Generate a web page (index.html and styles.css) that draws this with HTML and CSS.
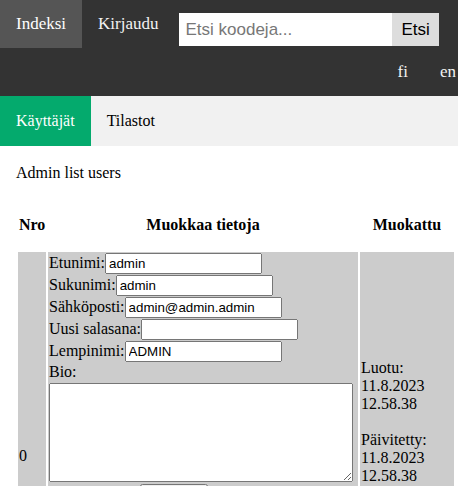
FILE: index.html
```html
<!DOCTYPE html>
<html lang="fi">
<head>
<meta charset="utf-8">
<title>Admin list users</title>
<link rel="stylesheet" href="styles.css">
</head>
<body>
<div class="page">
  <nav class="topnav">
    <a class="nav-link active" href="#">Indeksi</a>
    <a class="nav-link" href="#">Kirjaudu</a>
    <form class="search">
      <input class="search-input" type="text" placeholder="Etsi koodeja...">
      <button class="search-btn" type="button">Etsi</button>
    </form>
    <div class="lang">
      <a class="nav-link" href="#">fi</a>
      <a class="nav-link" href="#">en</a>
    </div>
  </nav>
  <nav class="subnav">
    <a class="sub-link active" href="#">Käyttäjät</a>
    <a class="sub-link" href="#">Tilastot</a>
  </nav>
  <main class="content">
    <p class="title">Admin list users</p>
    <table class="users">
      <thead>
        <tr>
          <th class="col-nro">Nro</th>
          <th class="col-edit">Muokkaa tietoja</th>
          <th class="col-date">Muokattu</th>
        </tr>
      </thead>
      <tbody>
        <tr class="user-row">
          <td>0</td>
          <td class="edit-cell">
            <form class="edit-form">
              <div class="field-row"><label>Etunimi:</label><input class="field" type="text" value="admin"></div>
              <div class="field-row"><label>Sukunimi:</label><input class="field" type="text" value="admin"></div>
              <div class="field-row"><label>Sähköposti:</label><input class="field" type="text" value="admin@admin.admin"></div>
              <div class="field-row"><label>Uusi salasana:</label><input class="field" type="password" value=""></div>
              <div class="field-row"><label>Lempinimi:</label><input class="field" type="text" value="ADMIN"></div>
              <label class="bio-label">Bio:</label>
              <textarea class="bio"></textarea>
              <div class="actions"><button class="small-btn" type="button" aria-label="Tallenna"></button></div>
            </form>
          </td>
          <td class="dates">Luotu:<br>11.8.2023<br>12.58.38<br><br>Päivitetty:<br>11.8.2023<br>12.58.38</td>
        </tr>
      </tbody>
    </table>
  </main>
</div>
</body>
</html>
```

FILE: styles.css
```css
html {
  overflow-x: hidden;
}

body {
  margin: 0;
  font-family: "Liberation Serif", "Times New Roman", serif;
  font-size: 16px;
  color: #000;
  background: #fff;
}

.page {
  width: 472px;
}

.topnav {
  display: flex;
  flex-wrap: wrap;
  align-items: flex-start;
  background: #333;
}

.nav-link {
  display: block;
  padding: 14px 16px;
  font-size: 17px;
  line-height: 20px;
  color: #f2f2f2;
  text-decoration: none;
}

.nav-link.active {
  background: #555;
  color: #fff;
}

.search {
  display: flex;
  margin: 13px 0 0 5px;
}

.search-input {
  box-sizing: border-box;
  width: 213px;
  height: 33px;
  padding: 6px;
  border: none;
  border-radius: 0;
  font-family: "Liberation Sans", Arial, sans-serif;
  font-size: 17px;
  outline: none;
}

.search-input::placeholder {
  color: #777;
}

.search-btn {
  box-sizing: border-box;
  height: 33px;
  padding: 0 9px;
  border: none;
  border-radius: 0;
  background: #ddd;
  color: #000;
  font-family: "Liberation Sans", Arial, sans-serif;
  font-size: 17px;
}

.lang {
  display: flex;
  justify-content: flex-end;
  width: 100%;
}

.subnav {
  display: flex;
  background: #f1f1f1;
}

.sub-link {
  display: block;
  padding: 16px;
  font-size: 16px;
  line-height: 18px;
  color: #000;
  text-decoration: none;
}

.sub-link.active {
  background: #04aa6d;
  color: #fff;
}

.content {
  padding: 0 16px;
}

.title {
  margin: 18px 0 16px;
}

.users {
  width: 100%;
  table-layout: fixed;
  border-spacing: 2px;
}

.users th {
  box-sizing: border-box;
  padding: 16px 1px;
  font-weight: bold;
}

.col-nro {
  width: 28px;
}

.col-edit {
  width: 310px;
}

.users td {
  padding: 1px;
  background: #ccc;
  vertical-align: middle;
}

.user-row {
  height: 407px;
}

.users .edit-cell {
  vertical-align: top;
}

.users .dates {
  padding-bottom: 69px;
}

.edit-form {
  margin: 0;
}

.field-row {
  display: flex;
  align-items: baseline;
  height: 22px;
}

.field {
  box-sizing: border-box;
  width: 157px;
  height: 21px;
  margin: 0;
  font-family: "Liberation Sans", Arial, sans-serif;
  font-size: 13.33px;
}

.bio-label {
  display: block;
  line-height: 18px;
}

.bio {
  display: block;
  box-sizing: border-box;
  width: 304px;
  height: 99px;
  margin: 2px 0 0;
}

.actions {
  margin: 2px 0 0 91px;
}

.small-btn {
  display: block;
  width: 68px;
  height: 21px;
}
```
